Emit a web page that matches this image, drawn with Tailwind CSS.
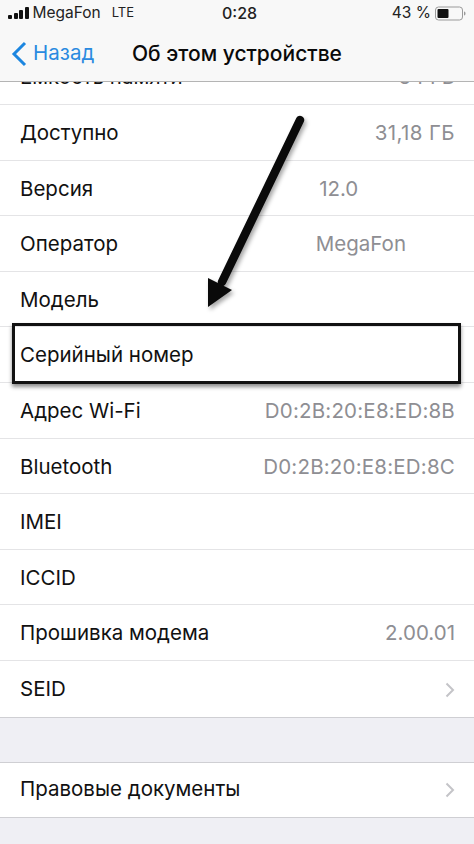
<!DOCTYPE html>
<html lang="ru">
<head>
<meta charset="utf-8">
<script src="https://cdn.jsdelivr.net/npm/@tailwindcss/browser@4"></script>
</head>
<body class="m-0">
<div class="relative w-[474px] h-[844px] overflow-hidden bg-[#efeff4] font-['Inter','Liberation_Sans',sans-serif] text-[#111] text-[20.5px]">
  <!-- nav overlay -->
  <div class="absolute inset-x-0 top-0 z-10 h-[82px] bg-[#f8f8f8] border-b border-[#b4b4b4]">
    <div class="relative flex items-center h-[26px] pl-[8px] pr-[8px] text-[15.500px] text-[#222]">
      <div class="flex items-end gap-[1.500px] h-[12px]">
        <span class="w-[4px] h-[4px] rounded-[1px] bg-[#111]"></span>
        <span class="w-[4px] h-[6px] rounded-[1px] bg-[#111]"></span>
        <span class="w-[4px] h-[9px] rounded-[1px] bg-[#111]"></span>
        <span class="w-[4px] h-[12px] rounded-[1px] bg-[#111]"></span>
      </div>
      <span class="ml-[4px]">MegaFon</span>
      <span class="ml-[11px] text-[13px]">LTE</span>
      <span class="absolute left-[222px] font-medium text-[16px]">0:28</span>
      <div class="ml-auto flex items-center gap-[4px]">
        <span>43 %</span>
        <svg width="31" height="15" viewBox="0 0 31 15"><rect x="0.5" y="1" width="27" height="13" rx="3" fill="none" stroke="#9a9a9a"/><rect x="2.5" y="3" width="11" height="9" rx="1" fill="#111"/><path d="M29 5.5c1.2.3 1.5 1 1.5 2s-.3 1.700-1.500 2z" fill="#9a9a9a"/></svg>
      </div>
    </div>
    <div class="relative flex items-center h-[55px]">
      <svg class="ml-[11px]" width="16" height="26" viewBox="0 0 16 26"><path d="M14 2L3 13l11 11" fill="none" stroke="#1c86e0" stroke-width="3"/></svg>
      <span class="ml-[6px] text-[#2a8ae0] text-[20.500px]">Назад</span>
      <span class="absolute left-[132px] font-medium text-[21px] text-[#0a0a0a]">Об этом устройстве</span>
    </div>
  </div>

  <!-- list -->
  <div class="pt-[49.500px]">
    <div class="bg-white border-b border-[#cfcfd3]">
      <div class="flex items-center justify-between h-[55.600px] pt-[2px] pl-[20px] pr-[19px] border-b border-[#e4e4e6]"><span>Емкость памяти</span><span class="text-[#8e8e93]">64 ГБ</span></div>
      <div class="flex items-center justify-between h-[55.600px] pt-[2px] pl-[20px] pr-[19px] border-b border-[#e4e4e6]"><span>Доступно</span><span class="text-[#8e8e93] tracking-[0.400px]">31,18 ГБ</span></div>
      <div class="flex items-center h-[55.600px] pt-[2px] pl-[20px] pr-[19px] border-b border-[#e4e4e6]"><span>Версия</span><span class="ml-[226px] text-[#8e8e93]">12.0</span></div>
      <div class="flex items-center justify-between h-[55.600px] pt-[2px] pl-[20px] pr-[68px] border-b border-[#e4e4e6]"><span>Оператор</span><span class="text-[#8e8e93]">MegaFon</span></div>
      <div class="flex items-center h-[55.600px] pt-[2px] pl-[20px] border-b border-[#e4e4e6]"><span>Модель</span></div>
      <div class="flex items-center h-[55.600px] pt-[2px] pl-[20px] border-b border-[#e4e4e6]"><span>Серийный номер</span></div>
      <div class="flex items-center justify-between h-[55.600px] pt-[2px] pl-[20px] pr-[19px] border-b border-[#e4e4e6]"><span>Адрес Wi-Fi</span><span class="text-[#8e8e93] tracking-[0.200px]">D0:2B:20:E8:ED:8B</span></div>
      <div class="flex items-center justify-between h-[55.600px] pt-[2px] pl-[20px] pr-[19px] border-b border-[#e4e4e6]"><span>Bluetooth</span><span class="text-[#8e8e93] tracking-[0.200px]">D0:2B:20:E8:ED:8C</span></div>
      <div class="flex items-center h-[55.600px] pt-[2px] pl-[20px] border-b border-[#e4e4e6]"><span>IMEI</span></div>
      <div class="flex items-center h-[55.600px] pt-[2px] pl-[20px] border-b border-[#e4e4e6]"><span>ICCID</span></div>
      <div class="flex items-center justify-between h-[55.600px] pt-[2px] pl-[20px] pr-[19px] border-b border-[#e4e4e6]"><span>Прошивка модема</span><span class="text-[#8e8e93]">2.00.01</span></div>
      <div class="flex items-center justify-between h-[55.600px] pt-[2px] pl-[20px] pr-[19px]"><span>SEID</span><svg width="10" height="16" viewBox="0 0 10 16"><path d="M1.500 1.500L8 8l-6.500 6.500" fill="none" stroke="#c4c4c8" stroke-width="2"/></svg></div>
    </div>
    <div class="h-[44px]"></div>
    <div class="bg-white border-y border-[#cfcfd3]">
      <div class="flex items-center justify-between h-[54px] pl-[20px] pr-[19px]"><span>Правовые документы</span><svg width="10" height="16" viewBox="0 0 10 16"><path d="M1.500 1.500L8 8l-6.500 6.500" fill="none" stroke="#c4c4c8" stroke-width="2"/></svg></div>
    </div>
  </div>

  <!-- annotation box -->
  <div class="absolute z-20 left-[12px] top-[323px] w-[449px] h-[61px] border-[3px] border-[#111] shadow-[0_3px_4px_rgba(0,0,0,0.45)]"></div>
  <!-- annotation arrow -->
  <svg class="absolute z-20 left-0 top-0 drop-shadow-[2px_3px_2px_rgba(0,0,0,0.35)]" width="474" height="844" viewBox="0 0 474 844">
    <path d="M300 120L222 282" fill="none" stroke="#0a0a0a" stroke-width="8.500" stroke-linecap="round"/>
    <path d="M208 278L232 290L208 307Z" fill="#0a0a0a"/>
  </svg>
</div>
</body>
</html>
